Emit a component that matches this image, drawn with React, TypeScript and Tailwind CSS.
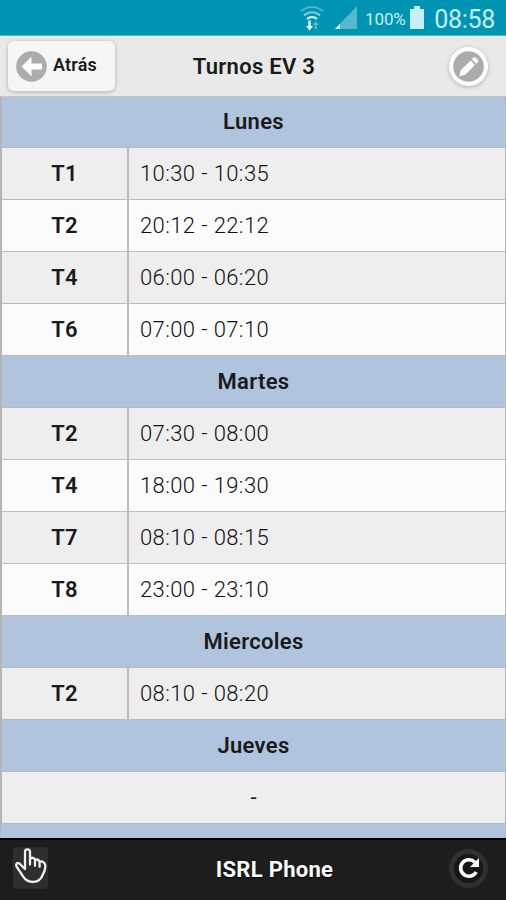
// ── Data ──────────────────────────────────────────────────────────────────────

type Turno = { name: string; time: string }
type Day = { name: string; turnos: Turno[] }

const DAYS: Day[] = [
  {
    name: 'Lunes',
    turnos: [
      { name: 'T1', time: '10:30 - 10:35' },
      { name: 'T2', time: '20:12 - 22:12' },
      { name: 'T4', time: '06:00 - 06:20' },
      { name: 'T6', time: '07:00 - 07:10' },
    ],
  },
  {
    name: 'Martes',
    turnos: [
      { name: 'T2', time: '07:30 - 08:00' },
      { name: 'T4', time: '18:00 - 19:30' },
      { name: 'T7', time: '08:10 - 08:15' },
      { name: 'T8', time: '23:00 - 23:10' },
    ],
  },
  { name: 'Miercoles', turnos: [{ name: 'T2', time: '08:10 - 08:20' }] },
  { name: 'Jueves', turnos: [] },
]

// ── Icons ─────────────────────────────────────────────────────────────────────

function WifiIcon() {
  return (
    <svg width="24" height="26" viewBox="0 0 24 26" fill="none">
      <g stroke="#7fcbdc" strokeWidth="2">
        <path d="M1 6.5C7 .5 17 .5 23 6.5" opacity=".6" />
        <path d="M4 10.5c4.5-4.3 11.500-4.300 16 0" />
      </g>
      <path d="M7 14c3-2.600 7-2.600 10 0" stroke="#d8f3f8" strokeWidth="2.200" />
      <path d="M8.200 15.500h2.600V21h2.200l-3.500 4.800L6 21h2.200z" fill="#e6f9fc" />
      <path d="M14.600 24h2.200v-4h2l-3.100-4-3.100 4h2z" fill="#5ab9ce" />
    </svg>
  )
}

function SignalIcon() {
  return (
    <svg width="24" height="25" viewBox="0 0 24 25">
      <path d="M23 1v23H1z" fill="#55b8cd" />
      <path d="M6 18.800V24H1z" fill="#d8f3f8" />
    </svg>
  )
}

function BatteryIcon() {
  return (
    <svg width="14" height="23" viewBox="0 0 14 23">
      <path d="M4 0h6v3h4v20H0V3h4z" fill="#c5eff6" />
    </svg>
  )
}

function BackIcon() {
  return (
    <svg width="31" height="31" viewBox="0 0 31 31">
      <circle cx="15.500" cy="15.500" r="15.300" fill="#acacac" />
      <path d="M5.500 15.500 15.500 5.700v6.700H26v6.200H15.500v6.700z" fill="#fff" />
    </svg>
  )
}

function PencilIcon() {
  return (
    <svg width="31" height="31" viewBox="0 0 31 31">
      <circle cx="15.500" cy="15.500" r="15.300" fill="#acacac" />
      <path
        d="m6.200 25.300 1.600-6L17.600 9.500l4.400 4.400-9.800 9.800zM18.800 8.300l1.700-1.700q1-.9 2 0l2.500 2.500q.8.900 0 1.900l-1.800 1.700z"
        fill="#fff"
      />
    </svg>
  )
}

function HandIcon() {
  return (
    <svg width="34" height="38" viewBox="0 0 34 38" fill="none">
      <path
        d="M11 22V4.800q0-2.500 2.500-2.500T16 4.800V12q1.500-1.800 3.300-1T21 13q2-1.200 3.800.3l.7 1.700q2-1.300 3.800.2 2.200 1.200 2 4-.1 5-2.300 8-2.600 7.600-9.600 7.700-6.700.1-10-5L2.600 19.700q-1.200-2.700 1-3.600 1.700-.4 3 1.600L11 22M16 11v6.500M21 13v5.800M25.600 15v4.800"
        stroke="#f1f1f1"
        strokeWidth="2.300"
        strokeLinecap="round"
        strokeLinejoin="round"
      />
    </svg>
  )
}

function ReloadIcon() {
  return (
    <svg width="22" height="22" viewBox="0 0 22 22" fill="none">
      <path
        d="M18.200 15A8.300 8.300 0 1 1 16.900 5.200"
        stroke="#fff"
        strokeWidth="3.600"
      />
      <path d="M21 1v9h-9z" fill="#fff" />
    </svg>
  )
}

// ── Layout pieces ─────────────────────────────────────────────────────────────

function StatusBar() {
  return (
    <div className="flex h-9 shrink-0 items-center justify-end border-b border-[#55b4c8] bg-[#0094b3] pr-[11px] text-[#c5eff6]">
      <WifiIcon />
      <div className="ml-2.5 flex">
        <SignalIcon />
      </div>
      <span className="ml-[7px] w-[41px] whitespace-nowrap pt-1 text-[17px] tracking-[-0.1px]">
        100%
      </span>
      <div className="ml-1 mr-2.5">
        <BatteryIcon />
      </div>
      <span className="w-[61px] whitespace-nowrap pt-[3px] text-right text-[25px] tracking-[-0.3px]">
        08:58
      </span>
    </div>
  )
}

function Header() {
  return (
    <header className="grid h-[61px] shrink-0 grid-cols-[1fr_auto_1fr] items-center border-b border-[#c5c5ca] bg-[#e9e9e9] px-2">
      <button className="flex h-[50px] w-[107px] items-center rounded-md bg-[#f6f6f6] pl-2 shadow-[0_1px_4px_rgba(0,0,0,0.25)]">
        <BackIcon />
        <span className="-mt-0.5 ml-1.5 text-[18px] font-semibold tracking-[0.2px]">
          Atrás
        </span>
      </button>
      <h1 className="pl-0.5 pt-0.5 text-[22px] font-semibold tracking-[0.3px]">
        Turnos EV 3
      </h1>
      <button className="mr-2.5 flex size-[39px] items-center justify-center justify-self-end rounded-full bg-white shadow-[0_1px_4px_rgba(0,0,0,0.25)]">
        <PencilIcon />
      </button>
    </header>
  )
}

function DaySection({ name, turnos }: Day) {
  return (
    <section>
      <h2 className="flex h-[52px] items-center justify-center border-b border-[#b5b9c0] bg-[#b0c4de] text-[22px] font-semibold tracking-[0.3px]">
        {name}
      </h2>
      {turnos.map((turno) => (
        <div
          key={turno.name}
          className="grid h-[52px] grid-cols-[127px_1fr] border-b border-[#bcbcbc] odd:bg-[#fbfbfb] even:bg-[#eeeeee]"
        >
          <div className="flex items-center justify-center border-r-2 border-[#bcbcbc] text-[22px] font-semibold tracking-[0.3px]">
            {turno.name}
          </div>
          <div className="flex items-center pl-[11px] text-[22px] font-light tracking-[0.4px] text-[#111]">
            {turno.time}
          </div>
        </div>
      ))}
      {turnos.length === 0 && (
        <div className="flex h-[52px] items-center justify-center border-b border-[#bcbcbc] bg-[#eeeeee] text-[22px]">
          -
        </div>
      )}
    </section>
  )
}

function Footer() {
  return (
    <footer className="flex h-[62px] shrink-0 items-center border-t-2 border-black bg-[#1d1d1d] pl-[13px] pr-[18px] text-white">
      <div className="-mt-1 flex h-[42px] w-[35px] items-start justify-center rounded bg-[#2e2e2e]">
        <HandIcon />
      </div>
      <span className="flex-1 pl-[52px] text-center text-[22px] font-bold tracking-[0.3px] [text-shadow:0_1px_1px_#000]">
        ISRL Phone
      </span>
      <button className="-mt-1 flex size-[39px] items-center justify-center rounded-full bg-[#303030]">
        <span className="flex size-[29px] items-center justify-center rounded-full bg-[#171717]">
          <ReloadIcon />
        </span>
      </button>
    </footer>
  )
}

// ── Page ──────────────────────────────────────────────────────────────────────

export default function App() {
  return (
    <div className="flex h-[900px] w-[506px] flex-col overflow-hidden bg-[#e9e9e9] font-[Roboto,sans-serif] leading-none text-[#1a1a1a]">
      <StatusBar />
      <Header />
      <main className="min-h-0 flex-1 overflow-hidden border-x border-[#b5b5b5] bg-[#b0c4de]">
        <div className="-mt-px border-l border-[#b5b5b5]">
          {DAYS.map((day) => (
            <DaySection key={day.name} {...day} />
          ))}
        </div>
      </main>
      <Footer />
    </div>
  )
}
